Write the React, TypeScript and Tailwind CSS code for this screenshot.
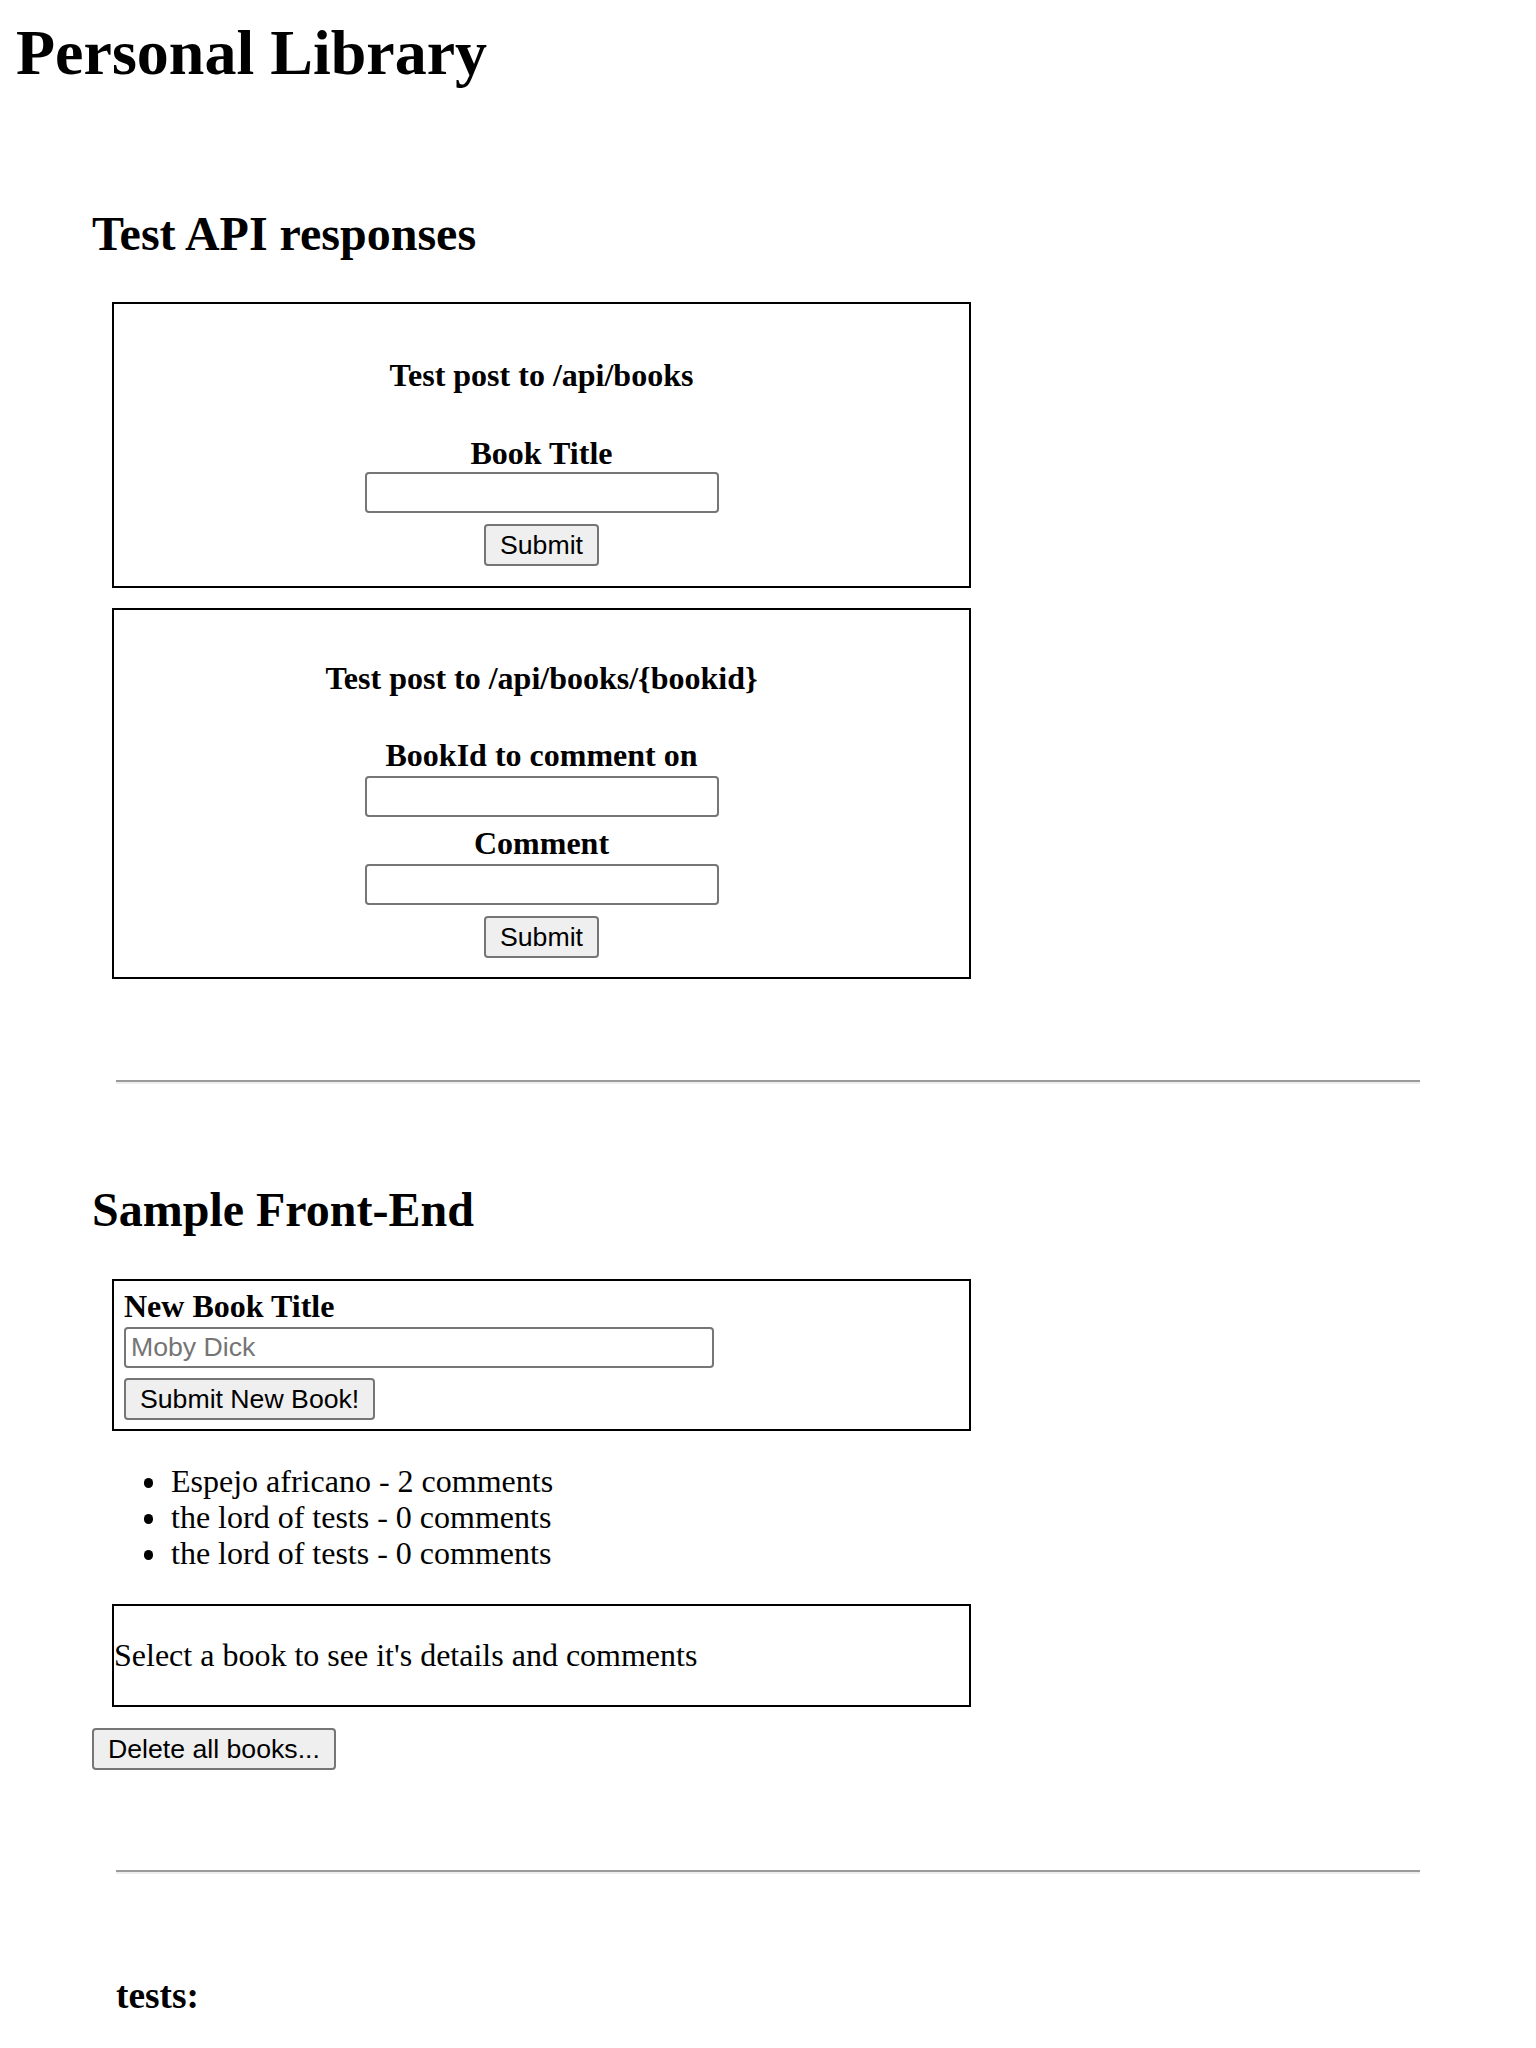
import React from 'react';

const inputCls =
  "block h-[41px] rounded-[4px] border-2 border-[#767676] bg-white px-[5px] text-[26.67px] font-['Liberation_Sans',Arial,sans-serif] text-black placeholder:text-[#757575] outline-none";
const buttonCls =
  "block h-[42px] rounded-[4px] border-2 border-[#767676] bg-[#efefef] px-[14px] text-[26.67px] leading-[30px] font-['Liberation_Sans',Arial,sans-serif] text-black";
const labelCls = 'block text-[32px] leading-[37px] font-bold';

export default function App() {
  const books = [
    { title: 'Espejo africano', comments: 2 },
    { title: 'the lord of tests', comments: 0 },
    { title: 'the lord of tests', comments: 0 },
  ];

  return (
    <div className="min-h-screen bg-white font-['Liberation_Serif','Times_New_Roman',serif] text-black">
      <h1 className="pl-4 pt-4 text-[64px] leading-[74px] font-bold">Personal Library</h1>

      <section className="pl-[92px]">
        <h2 className="mt-[116px] text-[48px] leading-[55px] font-bold">Test API responses</h2>
        <div className="ml-[20px] mt-[41px] flex w-[859px] flex-col gap-5">
          <form className="flex flex-col items-center border-2 border-black pt-[53px] pb-[20px]">
            <h4 className={labelCls}>Test post to /api/books</h4>
            <label className={`${labelCls} mt-[41px]`}>Book Title</label>
            <input type="text" className={`${inputCls} w-[354px]`} />
            <button type="button" className={`${buttonCls} mt-[11px]`}>Submit</button>
          </form>

          <form className="flex flex-col items-center border-2 border-black pt-[50px] pb-[19px]">
            <h4 className={labelCls}>Test post to /api/books/{'{bookid}'}</h4>
            <label className={`${labelCls} mt-[40px]`}>BookId to comment on</label>
            <input type="text" className={`${inputCls} mt-[2px] w-[354px]`} />
            <label className={`${labelCls} mt-[8px]`}>Comment</label>
            <input type="text" className={`${inputCls} mt-[2px] w-[354px]`} />
            <button type="button" className={`${buttonCls} mt-[11px]`}>Submit</button>
          </form>
        </div>
      </section>

      <hr className="mx-[116px] mt-[101px] h-0 border-0 border-t-2 border-b-2 border-t-[#9a9a9a] border-b-[#eeeeee]" />

      <section className="pl-[92px]">
        <h2 className="mt-[98px] text-[48px] leading-[55px] font-bold">Sample Front-End</h2>

        <form className="ml-[20px] mt-[42px] flex w-[859px] flex-col items-start border-2 border-black pl-[10px] pt-[7px] pb-[9px]">
          <label className={labelCls}>New Book Title</label>
          <input type="text" placeholder="Moby Dick" className={`${inputCls} mt-[2px] w-[590px]`} />
          <button type="button" className={`${buttonCls} mt-[10px]`}>Submit New Book!</button>
        </form>

        <ul className="mt-[32px] pl-[52px] text-[32px] leading-[36px]">
          {books.map((b, i) => (
            <li key={i} className="flex items-center">
              <span className="mt-[4px] mr-[18px] h-[10px] w-[9px] rounded-full bg-black" />
              <span>
                {b.title} - {b.comments} comments
              </span>
            </li>
          ))}
        </ul>

        <div className="ml-[20px] mt-[33px] w-[859px] border-2 border-black">
          <p className="my-[31px] text-[32px] leading-[37px]">Select a book to see it's details and comments</p>
        </div>

        <button type="button" className={`${buttonCls} mt-[21px] px-[13px]`}>Delete all books...</button>
      </section>

      <hr className="mx-[116px] mt-[100px] h-0 border-0 border-t-2 border-b-2 border-t-[#9a9a9a] border-b-[#eeeeee]" />

      <h3 className="ml-[116px] mt-[100px] pb-10 text-[37.33px] leading-[43px] font-bold">tests:</h3>
    </div>
  );
}
